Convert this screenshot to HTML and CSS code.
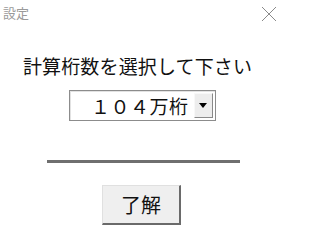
FILE: index.html
```html
<!DOCTYPE html>
<html lang="ja">
<head>
<meta charset="utf-8">
<title>設定</title>
<link rel="stylesheet" href="styles.css">
</head>
<body>
<div class="dialog">
  <div class="titlebar">
    <span class="title">設定</span>
    <svg class="close" width="16" height="16" viewBox="0 0 16 16"><path d="M1 1 L15 15 M15 1 L1 15" stroke="#8a8a8a" stroke-width="1" fill="none"/></svg>
  </div>
  <div class="prompt">計算桁数を選択して下さい</div>
  <div class="select">
    <span class="value">１０４万桁</span>
    <span class="drop"><svg width="8" height="5" viewBox="0 0 8 5"><path d="M0 0 H8 L4 5 Z" fill="#000"/></svg></span>
  </div>
  <div class="rule"></div>
  <button class="ok">了解</button>
</div>
</body>
</html>
```
FILE: styles.css
```css
html, body {
  margin: 0;
  padding: 0;
  background: #fff;
}
body {
  font-family: "Noto Sans CJK JP", "Noto Sans", sans-serif;
  color: #111;
}
.dialog {
  width: 283px;
  height: 240px;
  display: flex;
  flex-direction: column;
  align-items: center;
}
.titlebar {
  align-self: stretch;
  display: flex;
  justify-content: space-between;
  align-items: center;
  height: 24px;
  padding: 1px 6px 0 3px;
}
.title {
  font-size: 13px;
  line-height: 16px;
  color: #9a9a9a;
}
.close {
  display: block;
  margin-top: 2px;
}
.prompt {
  margin-top: 30px;
  margin-right: 8px;
  font-size: 19px;
  line-height: 22px;
  letter-spacing: 0.15px;
  color: #111;
}
.select {
  margin-top: 13px;
  margin-left: 1px;
  width: 143px;
  height: 29px;
  border: 1px solid #8c8c8c;
  box-shadow: inset 1px 1px 0 #e2e2e2;
  display: flex;
  align-items: center;
  justify-content: flex-end;
  padding-right: 2px;
}
.value {
  font-size: 19px;
  line-height: 22px;
  margin-right: 5px;
  letter-spacing: 0.5px;
  color: #111;
}
.drop {
  width: 19px;
  height: 25px;
  background: #ededed;
  border-left: 1px solid #f8f8f8;
  border-top: 1px solid #f8f8f8;
  border-right: 1px solid #8a8a8a;
  border-bottom: 1px solid #8a8a8a;
  display: flex;
  align-items: center;
  justify-content: center;
  box-sizing: border-box;
}
.drop svg {
  display: block;
}
.rule {
  margin-top: 39px;
  margin-left: 3px;
  width: 193px;
  height: 3px;
  background: #6f6f6f;
}
.ok {
  margin-top: 22px;
  width: 79px;
  height: 40px;
  padding: 0;
  font-family: "Noto Sans CJK JP", "Noto Sans", sans-serif;
  font-size: 20px;
  line-height: 22px;
  color: #111;
  background: #efefef;
  border-top: 1px solid #e0e0e0;
  border-left: 1px solid #e0e0e0;
  border-right: 2px solid #6a6a6a;
  border-bottom: 2px solid #6a6a6a;
  border-radius: 0;
}
```
